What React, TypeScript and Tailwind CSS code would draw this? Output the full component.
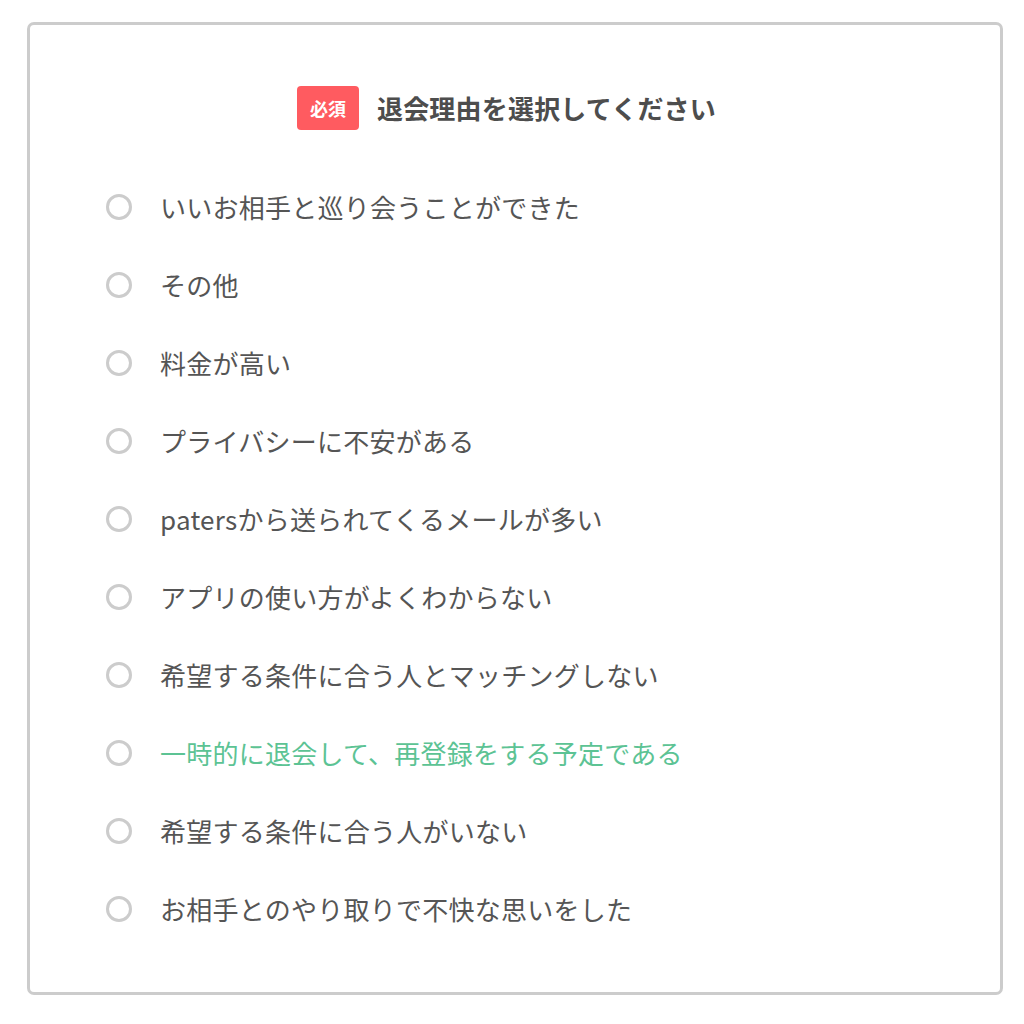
const reasons = [
  'いいお相手と巡り会うことができた',
  'その他',
  '料金が高い',
  'プライバシーに不安がある',
  'patersから送られてくるメールが多い',
  'アプリの使い方がよくわからない',
  '希望する条件に合う人とマッチングしない',
  '一時的に退会して、再登録をする予定である',
  '希望する条件に合う人がいない',
  'お相手とのやり取りで不快な思いをした',
]

export default function App() {
  const highlighted = 7

  return (
    <div
      className="w-[1024px] h-[1024px] bg-white pl-[27px] pt-[22px]"
      style={{ fontFamily: '"Noto Sans CJK JP", "Noto Sans", sans-serif' }}
    >
      <div className="w-[976px] h-[973px] border-[3px] border-[#cccccc] rounded-[7px] pt-[61px] pb-[45px] pl-[76px]">
        {/* Header */}
        <div className="flex items-center justify-center gap-[18px] pr-[93px]">
          <span className="w-[62px] h-[44px] rounded-[4px] bg-[#ff5b60] text-white font-bold text-[18px] flex items-center justify-center">
            必須
          </span>
          <h2 className="text-[26px] tracking-[0.2px] font-bold text-[#4d4d4d] leading-none">
            退会理由を選択してください
          </h2>
        </div>

        {/* Options */}
        <ul className="mt-[38px]">
          {reasons.map((r, i) => (
            <li key={r} className="h-[78px] flex items-center gap-[28px]">
              <span className="w-[26px] h-[26px] rounded-full border-[3px] border-[#cccccc] shrink-0" />
              <span
                className={
                  i === highlighted
                    ? 'text-[26px] tracking-[0.25px] leading-none text-[#5cc394]'
                    : 'text-[26px] tracking-[0.25px] leading-none text-[#555555]'
                }
              >
                {r}
              </span>
            </li>
          ))}
        </ul>
      </div>
    </div>
  )
}
